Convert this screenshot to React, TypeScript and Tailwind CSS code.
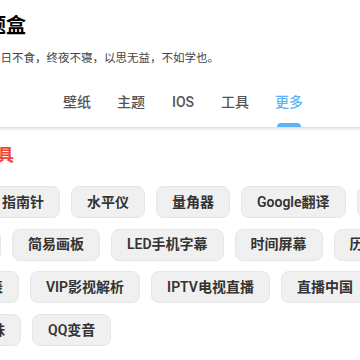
import React from "react";

const tabs = ["壁纸", "主题", "IOS", "工具", "更多"];

const rows: { offset: string; items: string[] }[] = [
  { offset: "ml-[-14px]", items: ["指南针", "水平仪", "量角器", "Google翻译", "手电筒"] },
  { offset: "ml-[-73px]", items: ["二维码", "简易画板", "LED手机字幕", "时间屏幕", "历史今天"] },
  { offset: "ml-[-55px]", items: ["电子表", "VIP影视解析", "IPTV电视直播", "直播中国"] },
  { offset: "ml-[-39px]", items: ["萌妹", "QQ变音"] },
];

function Chip({ label }: { label: string }) {
  return (
    <div className="flex-none h-[32px] px-[15px] flex items-center rounded-lg border border-[#e6e6e6] bg-[#f0f0f0] text-[14px] font-semibold text-[#333] whitespace-nowrap">
      {label}
    </div>
  );
}

export default function App() {
  return (
    <div className="w-[360px] h-[360px] overflow-hidden bg-white font-['Roboto','Noto_Sans_CJK_SC',sans-serif]">
      <header className="border-b border-[#e0e0e0] shadow-[0_1px_3px_rgba(0,0,0,0.12)]">
        <div className="ml-[-34px] pt-[12px] whitespace-nowrap">
          <h1 className="text-[20px] leading-[28px] font-bold text-black">主题盒</h1>
          <p className="mt-[10px] text-[11.5px] leading-[16px] text-[#444]">
            吾尝终日不食，终夜不寝，以思无益，不如学也。
          </p>
        </div>
        <nav className="mt-[26px] flex pl-[50px]">
          {tabs.map((t) => {
            const active = t === "更多";
            return (
              <div key={t} className="flex flex-col items-center px-[13px]">
                <span
                  className={`text-[14px] leading-[20px] font-medium ${
                    active ? "text-[#5eb3f6]" : "text-[#555]"
                  }`}
                >
                  {t}
                </span>
                <div
                  className={`mt-[11px] h-[4px] w-[24px] rounded-t-full ${
                    active ? "bg-[#5eb3f6]" : "bg-transparent"
                  }`}
                />
              </div>
            );
          })}
        </nav>
      </header>

      <h2 className="ml-[-54px] mt-[15px] text-[17px] leading-[24px] font-bold text-[#f44336] whitespace-nowrap">
        常用工具
      </h2>

      <div className="mt-[19px] flex flex-col gap-y-[10.7px]">
        {rows.map((r, i) => (
          <div key={i} className={`flex gap-x-[11px] ${r.offset}`}>
            {r.items.map((it) => (
              <Chip key={it} label={it} />
            ))}
          </div>
        ))}
      </div>
    </div>
  );
}
